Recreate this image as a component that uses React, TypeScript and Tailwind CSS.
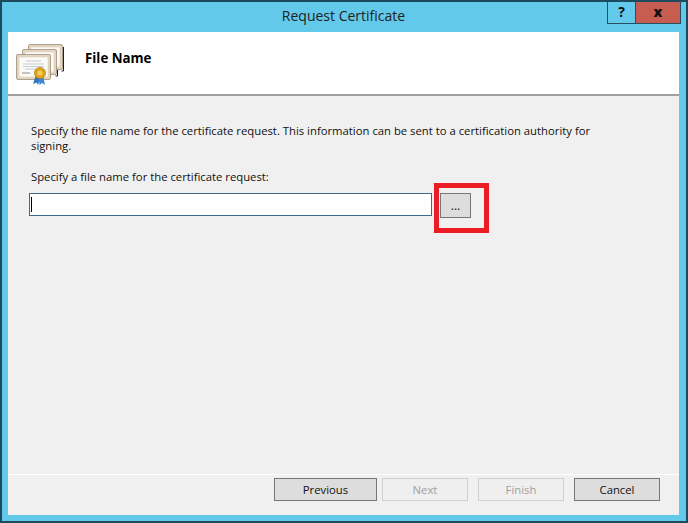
const font = "font-['Open_Sans','Noto_Sans',sans-serif]";

function CertificateSheet({ x, y }: { x: number; y: number }) {
  return (
    <g transform={`translate(${x} ${y})`}>
      <rect x="0.5" y="0.5" width="34" height="25" rx="1.5" fill="#e4d6c0" stroke="#9a8b78" strokeWidth="0.8" />
      <rect x="3" y="3" width="29" height="20" fill="#fbfaf7" stroke="#d4c6ae" strokeWidth="0.5" />
      <path d="M10 7h15M7 10h21M7 12.500h21M9 15h17" stroke="#b9bec8" strokeWidth="0.8" />
      <path d="M6 19h8" stroke="#a39c92" strokeWidth="1.2" />
    </g>
  );
}

function CertificateIcon() {
  return (
    <svg width="50" height="42" viewBox="0 0 50 42" className="shrink-0">
      <path d="M47.500 3v24h-2" fill="none" stroke="#222" strokeWidth="1" />
      <path d="M41.500 8v24h-2" fill="none" stroke="#222" strokeWidth="1" />
      <CertificateSheet x={12} y={0} />
      <CertificateSheet x={6} y={5} />
      <CertificateSheet x={0} y={10} />
      <path d="M20 31l-3 9 3.500-1.500 1.500 2.500 2-7z" fill="#2f74c4" />
      <path d="M27 31l2 10-3-2-2.500 2-1-8z" fill="#4288d8" />
      <circle cx="24" cy="29" r="5.500" fill="#dfa51c" stroke="#b47f10" strokeWidth="0.8" />
      <circle cx="24" cy="29" r="2.500" fill="#f3cf5a" />
    </svg>
  );
}

function WizardButton({ label, width, disabled }: { label: string; width: string; disabled?: boolean }) {
  return (
    <button
      type="button"
      disabled={disabled}
      className={
        disabled
          ? `${width} h-[23px] border border-[#d0d0d0] bg-[#efefef] text-[11.3px] leading-none text-[#a0a0a0]`
          : `${width} h-[23px] border border-[#767676] bg-[#dddddd] text-[11.3px] leading-none text-[#111111]`
      }
    >
      {label}
    </button>
  );
}

export default function App() {
  return (
    <div className={`${font} flex h-[523px] w-[688px] flex-col overflow-hidden border-2 border-[#1d4a5c] bg-[#63c9ea] pr-[7px] pb-[6px] pl-[6px]`}>
      <div className="relative flex h-[30px] shrink-0 items-center justify-center pb-[3px] text-[14px] text-[#222222]">
        Request Certificate
        <div className="absolute top-[-2px] right-[-2px] flex h-[24px]">
          <div className="flex w-[29px] items-center justify-center border border-t-0 border-[#24505f] bg-[#63c9ea] text-[14px] font-bold text-[#111111]">
            ?
          </div>
          <div className="flex w-[45px] items-center justify-center border border-t-0 border-l-0 border-[#24505f] bg-[#c75c50] text-[14px] font-extrabold text-[#111111]">
            x
          </div>
        </div>
      </div>

      <div className="flex min-h-0 flex-1 flex-col bg-[#f0f0f0]">
        <div className="flex h-[64px] shrink-0 items-start border-b-2 border-[#a0a0a0] bg-white pt-[12px] pl-[8px]">
          <CertificateIcon />
          <h1 className="mt-[4px] ml-[19px] text-[13.300px] leading-[20px] font-bold text-black">File Name</h1>
        </div>

        <div className="relative flex-1 pt-[27px] pl-[23px] text-[11.3px] leading-[15px] text-[#111111]">
          <p className="w-[590px]">
            Specify the file name for the certificate request. This information can be sent to a certification authority for signing.
          </p>
          <p className="mt-[16px]">Specify a file name for the certificate request:</p>
          <div className="mt-[9px] -ml-[2px] flex items-start gap-[8px]">
            <div className="flex h-[23px] w-[403px] items-center border border-[#3c6b8b] bg-white pl-[1px]">
              <div className="h-[15px] w-px bg-black" />
            </div>
            <button
              type="button"
              className="flex h-[25px] w-[31px] items-center justify-center border border-[#777777] bg-[#dddddd] text-[12px] leading-none text-[#111111]"
            >
              ...
            </button>
          </div>
          <div className="absolute top-[87px] left-[426px] h-[50px] w-[55px] border-[5px] border-[#ec1c24]" />
        </div>

        <div className="flex h-[41px] shrink-0 items-start justify-end gap-[10px] border-t border-white pt-[3px] pr-[19px]">
          <WizardButton label="Previous" width="w-[103px]" />
          <div className="-ml-[5px] flex gap-[10px]">
            <WizardButton label="Next" width="w-[86px]" disabled />
            <WizardButton label="Finish" width="w-[86px]" disabled />
          </div>
          <WizardButton label="Cancel" width="w-[86px]" />
        </div>
      </div>
    </div>
  );
}
